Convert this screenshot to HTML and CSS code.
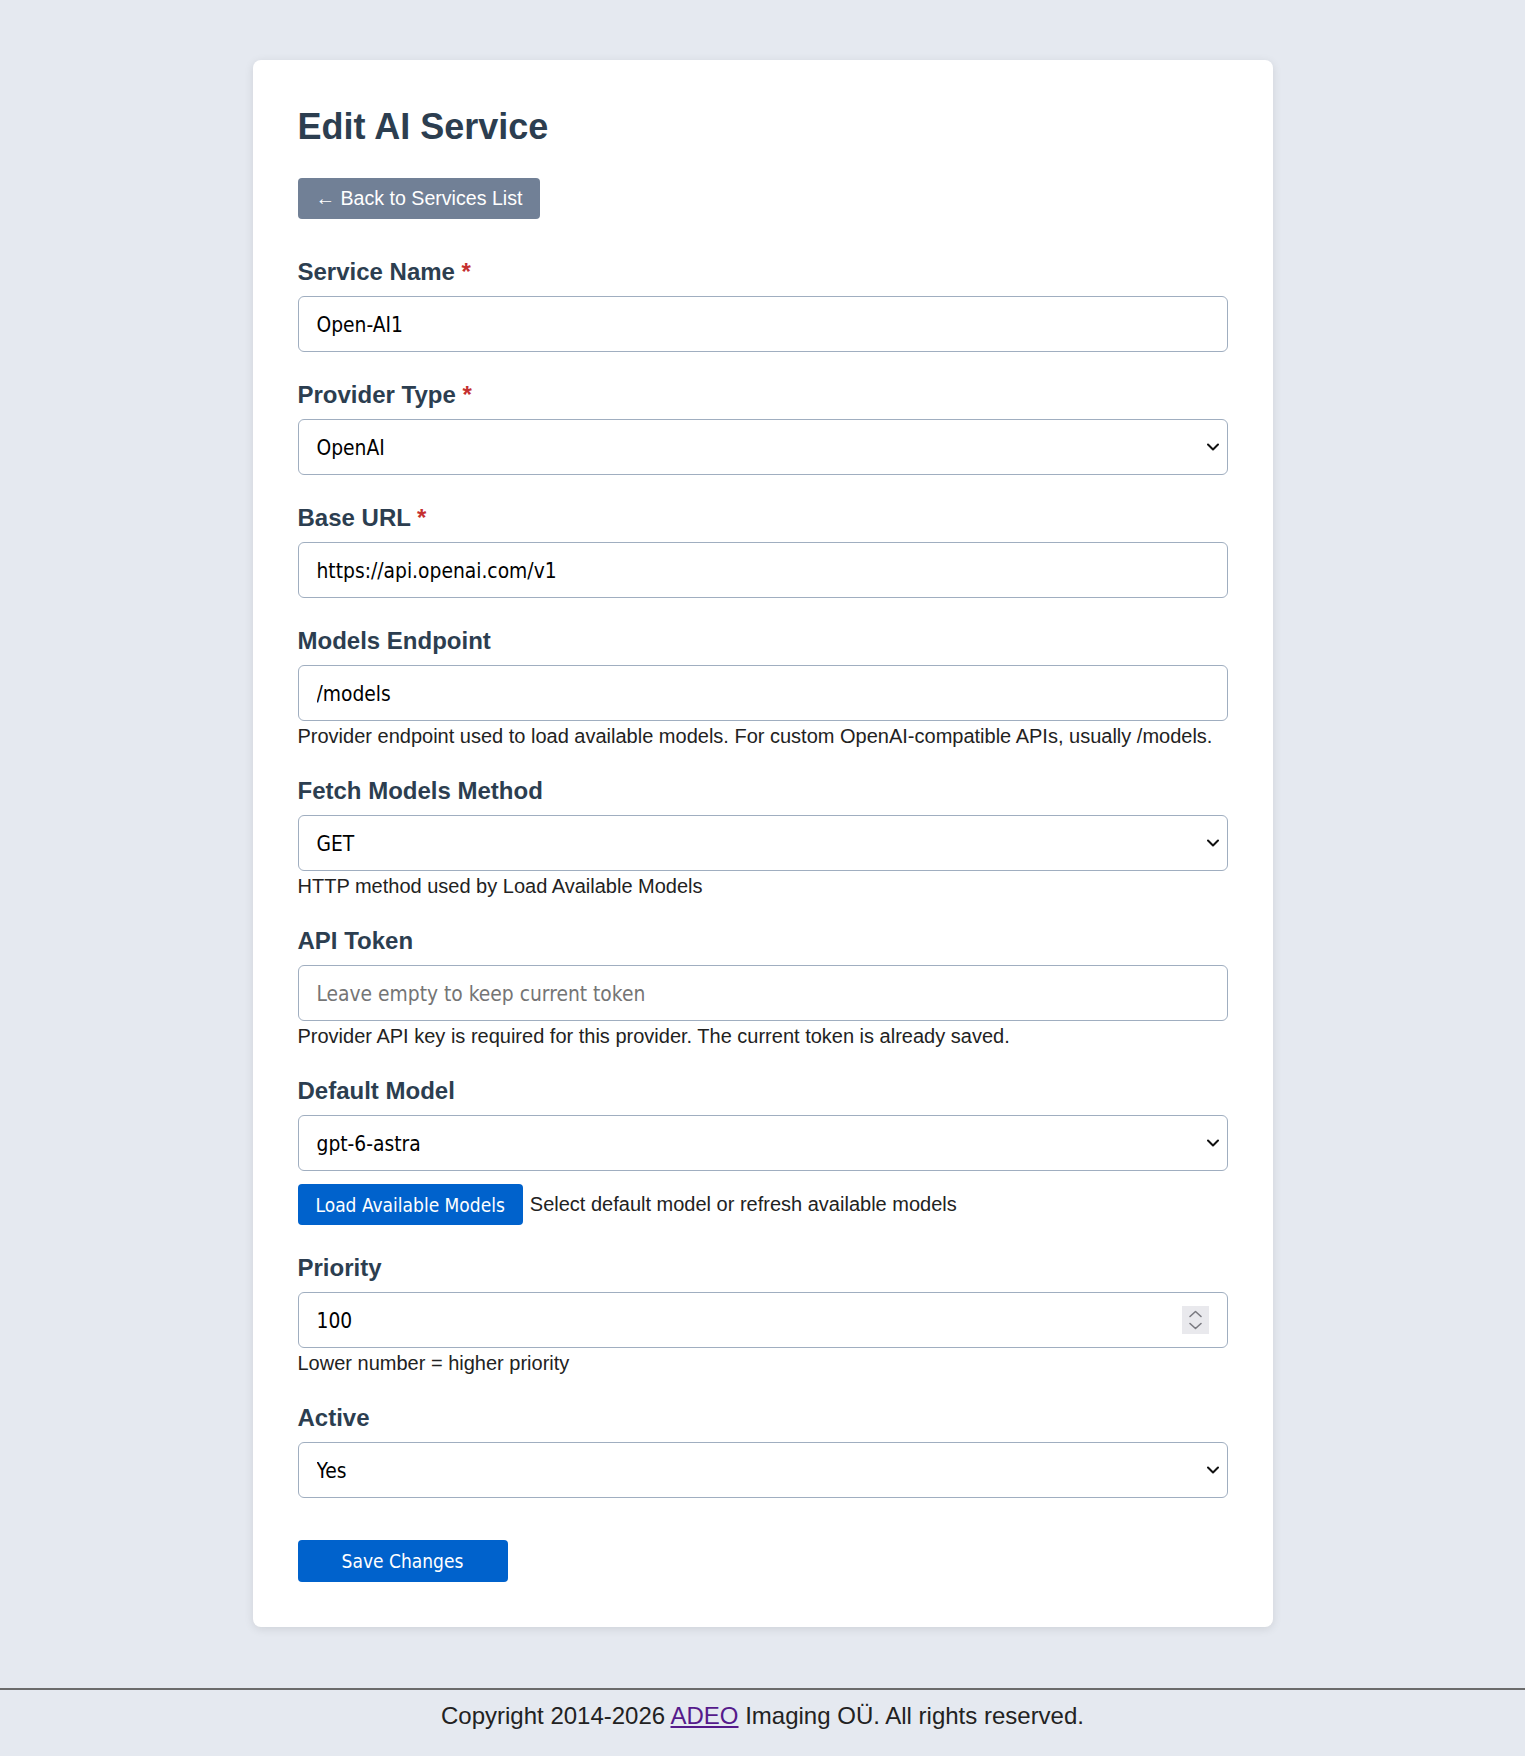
FILE: index.html
```html
<!DOCTYPE html>
<html lang="en">
<head>
<meta charset="utf-8">
<title>Edit AI Service</title>
<link rel="stylesheet" href="styles.css">
</head>
<body>
<main class="page">
  <div class="card">
    <h1 class="title">Edit AI Service</h1>
    <a class="btn-back" href="#">&larr; Back to Services List</a>

    <form class="form">
      <div class="group">
        <label class="label">Service Name <span class="req">*</span></label>
        <input class="control" type="text" value="Open-AI1">
      </div>

      <div class="group">
        <label class="label">Provider Type <span class="req">*</span></label>
        <div class="field-wrap">
          <select class="control select">
            <option selected>OpenAI</option>
            <option>Anthropic</option>
            <option>Custom</option>
          </select>
          <svg class="chevron" viewBox="0 0 12 8" width="12" height="8" aria-hidden="true"><path d="M1 1.5 L6 6.5 L11 1.5" fill="none" stroke="#111" stroke-width="2" stroke-linecap="round" stroke-linejoin="round"/></svg>
        </div>
      </div>

      <div class="group">
        <label class="label">Base URL <span class="req">*</span></label>
        <input class="control" type="text" value="https://api.openai.com/v1">
      </div>

      <div class="group">
        <label class="label">Models Endpoint</label>
        <input class="control" type="text" value="/models">
        <div class="help">Provider endpoint used to load available models. For custom OpenAI-compatible APIs, usually /models.</div>
      </div>

      <div class="group">
        <label class="label">Fetch Models Method</label>
        <div class="field-wrap">
          <select class="control select">
            <option selected>GET</option>
            <option>POST</option>
          </select>
          <svg class="chevron" viewBox="0 0 12 8" width="12" height="8" aria-hidden="true"><path d="M1 1.5 L6 6.5 L11 1.5" fill="none" stroke="#111" stroke-width="2" stroke-linecap="round" stroke-linejoin="round"/></svg>
        </div>
        <div class="help">HTTP method used by Load Available Models</div>
      </div>

      <div class="group">
        <label class="label">API Token</label>
        <input class="control" type="password" placeholder="Leave empty to keep current token">
        <div class="help">Provider API key is required for this provider. The current token is already saved.</div>
      </div>

      <div class="group">
        <label class="label">Default Model</label>
        <div class="field-wrap">
          <select class="control select">
            <option selected>gpt-6-astra</option>
          </select>
          <svg class="chevron" viewBox="0 0 12 8" width="12" height="8" aria-hidden="true"><path d="M1 1.5 L6 6.5 L11 1.5" fill="none" stroke="#111" stroke-width="2" stroke-linecap="round" stroke-linejoin="round"/></svg>
        </div>
        <div class="row">
          <button type="button" class="btn-primary btn-load">Load Available Models</button>
          <span class="row-text">Select default model or refresh available models</span>
        </div>
      </div>

      <div class="group">
        <label class="label">Priority</label>
        <div class="field-wrap">
          <input class="control number" type="number" value="100">
          <svg class="spinner" viewBox="0 0 27 28" width="27" height="28" aria-hidden="true">
            <rect x="0" y="0" width="27" height="28" fill="#e9e9ed"/>
            <path d="M8 10.5 L13.5 5.5 L19 10.5" fill="none" stroke="#7a7a80" stroke-width="1.6" stroke-linecap="round" stroke-linejoin="round"/>
            <path d="M8 17.5 L13.5 22.5 L19 17.5" fill="none" stroke="#7a7a80" stroke-width="1.6" stroke-linecap="round" stroke-linejoin="round"/>
          </svg>
        </div>
        <div class="help">Lower number = higher priority</div>
      </div>

      <div class="group">
        <label class="label">Active</label>
        <div class="field-wrap">
          <select class="control select">
            <option selected>Yes</option>
            <option>No</option>
          </select>
          <svg class="chevron" viewBox="0 0 12 8" width="12" height="8" aria-hidden="true"><path d="M1 1.5 L6 6.5 L11 1.5" fill="none" stroke="#111" stroke-width="2" stroke-linecap="round" stroke-linejoin="round"/></svg>
        </div>
      </div>

      <button type="button" class="btn-primary btn-save">Save Changes</button>
    </form>
  </div>
</main>
<footer class="footer">
  Copyright 2014-2026 <a class="footer-link" href="#">ADEO</a> Imaging OÜ. All rights reserved.
</footer>
</body>
</html>
```

FILE: styles.css
```css
html, body {
  margin: 0;
  padding: 0;
}
body {
  background: #e5e9f0;
  font-family: "Liberation Sans", Arial, sans-serif;
  color: #222;
}
.page {
  padding: 60px 0 61px;
}
.card {
  width: 1020px;
  box-sizing: border-box;
  margin: 0 auto;
  background: #fff;
  border-radius: 8px;
  box-shadow: 0 2px 10px rgba(0, 0, 0, 0.1);
  padding: 46px 45px 45px;
}
.title {
  margin: 0;
  font-size: 36px;
  font-weight: bold;
  color: #2c3e50;
}
.btn-back {
  display: inline-block;
  margin-top: 30px;
  background: #718096;
  color: #fff;
  text-decoration: none;
  font-size: 19.6px;
  line-height: 41px;
  height: 41px;
  padding: 0 18px;
  border-radius: 4px;
}
.form {
  margin-top: 39px;
}
.group {
  margin-bottom: 29px;
}
.label {
  display: block;
  font-size: 24px;
  font-weight: bold;
  color: #2c3e50;
  margin-bottom: 10px;
}
.req {
  color: #c53030;
}
.control {
  display: block;
  width: 100%;
  box-sizing: border-box;
  height: 56px;
  margin: 0;
  padding: 2px 18px 0;
  border: 1px solid #a0aec0;
  border-radius: 6px;
  background: #fff;
  font-family: "DejaVu Sans Condensed", "DejaVu Sans", sans-serif;
  font-stretch: condensed;
  font-size: 20.8px;
  color: #000;
}
.control::placeholder {
  color: #757575;
}
.number {
  -moz-appearance: textfield;
}
.number::-webkit-inner-spin-button,
.number::-webkit-outer-spin-button {
  -webkit-appearance: none;
  margin: 0;
}
.field-wrap {
  position: relative;
}
.select {
  appearance: none;
  -webkit-appearance: none;
  padding-right: 40px;
}
.chevron {
  position: absolute;
  right: 9px;
  top: 24px;
  pointer-events: none;
}
.spinner {
  position: absolute;
  right: 19px;
  top: 14px;
  pointer-events: none;
}
.help {
  margin-top: 4px;
  font-size: 20px;
  line-height: 23px;
  color: #222;
}
.row {
  display: flex;
  align-items: center;
  gap: 7px;
  margin-top: 13px;
}
.row-text {
  font-size: 20px;
  color: #222;
}
.btn-primary {
  height: 41px;
  margin: 0;
  padding: 0 18px;
  border: none;
  border-radius: 4px;
  background: #0062cc;
  color: #fff;
  font-family: "DejaVu Sans Condensed", "DejaVu Sans", sans-serif;
  font-stretch: condensed;
  font-size: 19px;
}
.btn-save {
  display: block;
  width: 210px;
  height: 42px;
  margin-top: 42px;
}
.footer {
  border-top: 2px solid #6b6b6b;
  padding: 12px 0 26px;
  text-align: center;
  font-size: 24px;
  color: #222;
}
.footer-link {
  color: #551a8b;
}
```
